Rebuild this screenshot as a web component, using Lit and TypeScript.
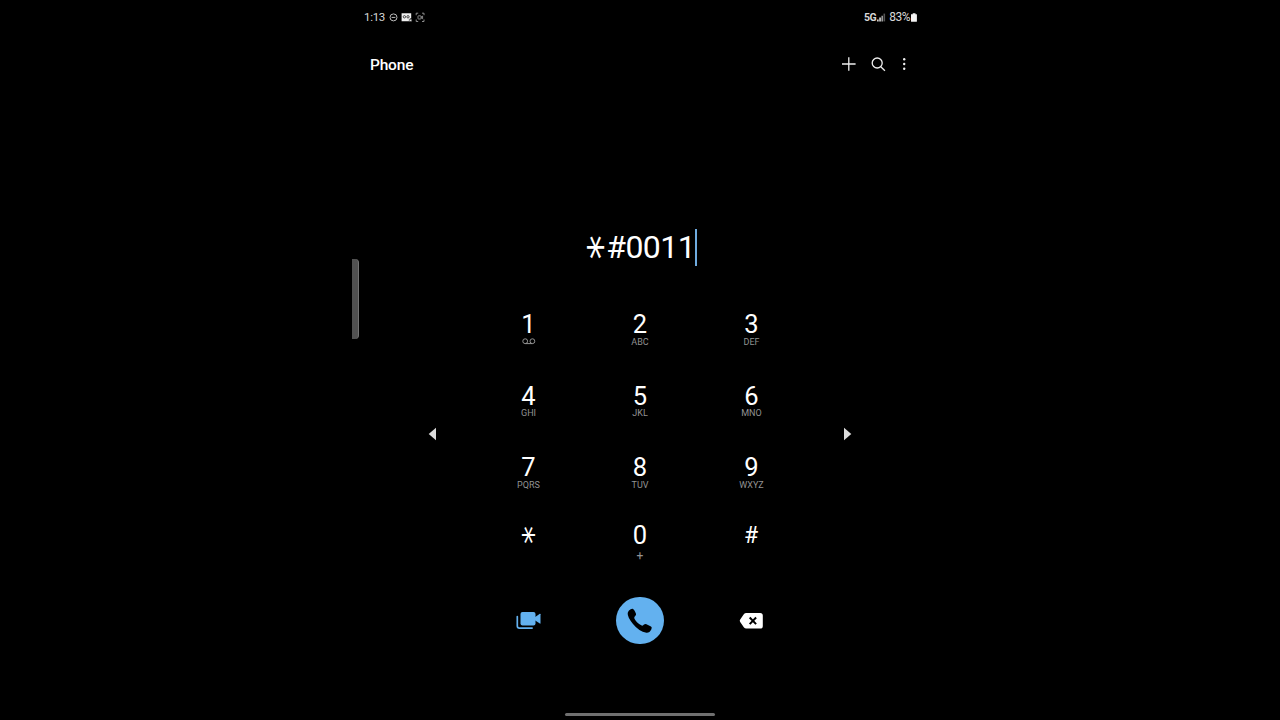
import { LitElement, html, css, svg, nothing } from "lit";
import { customElement, property } from "lit/decorators.js";

interface Key {
  digit: string;
  letters?: string;
}

const KEYS: Key[] = [
  { digit: "1", letters: "voicemail" },
  { digit: "2", letters: "ABC" },
  { digit: "3", letters: "DEF" },
  { digit: "4", letters: "GHI" },
  { digit: "5", letters: "JKL" },
  { digit: "6", letters: "MNO" },
  { digit: "7", letters: "PQRS" },
  { digit: "8", letters: "TUV" },
  { digit: "9", letters: "WXYZ" },
  { digit: "*" },
  { digit: "0", letters: "+" },
  { digit: "#" },
];

@customElement("status-bar")
export class StatusBar extends LitElement {
  static styles = css`
    :host {
      display: flex;
      justify-content: space-between;
      height: 34px;
      padding: 0 10px 0 12px;
      font-size: 12px;
      color: #d8d8d8;
    }

    .group {
      display: flex;
      align-items: center;
    }

    .time {
      width: 25px;
      font-size: 11.5px;
      letter-spacing: -0.3px;
    }

    .network {
      font-size: 10.5px;
      font-weight: 700;
      letter-spacing: -0.5px;
    }

    .battery {
      letter-spacing: -0.5px;
    }

    svg {
      display: block;
    }
  `;

  render() {
    return html`
      <div class="group">
        <span class="time">1:13</span>
        <svg width="38" height="12" viewBox="0 0 38 12" fill="none" stroke="#bbb">
          <circle cx="4.5" cy="6.4" r="3.5" stroke-width="1" />
          <path d="M2.6 6.4h3.8" />
          <path d="M12.600 2.200h9.600v5.400h-1.200v2.600h-8.400z" fill="#f0f0f0" stroke="none" />
          <circle cx="15.4" cy="5.8" r="1.2" stroke="#222" stroke-width="0.8" />
          <circle cx="19" cy="5.8" r="1.2" stroke="#222" stroke-width="0.8" />
          <path d="M20.3 8.2h2.5v2.3h-2.5z" fill="#ddd" stroke="#111" stroke-width="0.5" />
          <g stroke="#999" stroke-width="0.9">
            <path d="M27.2 4.2v-2h2M33 2.2h2v2M35 8.5v2h-2M29.2 10.5h-2v-2" />
            <rect x="29" y="4.8" width="3" height="3.2" rx="0.5" />
            <path d="M32 6.2l1.6-1.1v2.6L32 6.6" />
          </g>
        </svg>
      </div>
      <div class="group">
        <span class="network">5G</span>
        <svg width="13" height="12" viewBox="0 0 13 12">
          <path d="M1 10.400V8.500h1.700v1.900zM3.200 10.400V6.600h1.700v3.800z" fill="#ccc" />
          <path d="M5.400 10.400V4.700h1.600v5.700z" fill="#999" />
          <path d="M7.500 10.400V2.600h1.600v7.800z" fill="#555" />
        </svg>
        <span class="battery">83%</span>
        <svg width="8" height="12" viewBox="0 0 8 12">
          <path d="M2.700 2.200h2.800v1.100h1.400v6.900q0 .6-.6.6H1.600q-.6 0-.6-.6V3.300h1.700z" fill="#f4f4f4" />
        </svg>
      </div>
    `;
  }
}

@customElement("app-header")
export class AppHeader extends LitElement {
  static styles = css`
    :host {
      display: flex;
      align-items: center;
      justify-content: space-between;
      height: 60px;
      padding: 0 18px;
    }

    .title {
      padding-top: 1px;
      font-size: 15.5px;
      font-weight: 500;
      letter-spacing: -0.2px;
    }

    .actions {
      display: flex;
      align-items: center;
    }

    svg {
      display: block;
    }
  `;

  render() {
    return html`
      <div class="title">Phone</div>
      <div class="actions">
        <svg width="72" height="20" viewBox="0 0 72 20" fill="none" stroke="#eee" stroke-width="1.3">
          <path d="M4 10h13.6M10.8 3.2v13.6" />
          <circle cx="39.2" cy="9" r="5" />
          <path d="M42.8 12.7l4.1 4" />
          <g fill="#eee" stroke="none">
            <circle cx="66.2" cy="5.2" r="1.2" />
            <circle cx="66.2" cy="10" r="1.2" />
            <circle cx="66.2" cy="14.8" r="1.2" />
          </g>
        </svg>
      </div>
    `;
  }
}

@customElement("number-display")
export class NumberDisplay extends LitElement {
  @property() value = "";

  static styles = css`
    :host {
      display: flex;
      align-items: center;
      justify-content: center;
      height: 38px;
      padding-left: 3px;
      font-size: 32px;
      line-height: 38px;
      letter-spacing: -0.5px;
    }

    .star {
      width: 20px;
      text-align: center;
      font-family: "DejaVu Sans", sans-serif;
      font-size: 38px;
      transform: translateX(-7px) rotate(90deg) scaleX(1.3);
    }

    .caret {
      width: 1.5px;
      height: 37px;
      background: #6fabdf;
    }
  `;

  render() {
    return html`
      ${[...this.value].map((c) =>
        c === "*" ? html`<span class="star">*</span>` : html`<span>${c}</span>`
      )}
      <span class="caret"></span>
    `;
  }
}

@customElement("dial-key")
export class DialKey extends LitElement {
  @property() digit = "";
  @property() letters = "";

  static styles = css`
    :host {
      display: flex;
      flex-direction: column;
      align-items: center;
    }

    .digit {
      height: 26px;
      font-size: 25.5px;
      line-height: 26px;
    }

    .hash {
      padding-right: 1px;
      font-size: 23px;
      line-height: 27px;
    }

    .star {
      font-family: "DejaVu Sans", sans-serif;
      font-size: 29px;
      transform: translate(-4.5px, 0) rotate(90deg) scaleX(1.25);
    }

    .letters {
      padding-top: 0.8px;
      font-size: 9px;
      line-height: 8px;
      color: #929292;
    }

    .plus {
      font-size: 12px;
      padding-top: 4px;
    }

    svg {
      display: block;
      margin-top: 0.5px;
    }
  `;

  private _renderLetters() {
    if (!this.letters) return nothing;
    if (this.letters === "voicemail") {
      return html`
        <svg width="14" height="8" viewBox="0 0 14 8" fill="none" stroke="#929292">
          <circle cx="3.2" cy="3.2" r="2.4" />
          <circle cx="10.4" cy="3.2" r="2.4" />
          <path d="M3.2 5.6h7.2" />
        </svg>
      `;
    }
    return html`<div class="letters ${this.letters === "+" ? "plus" : ""}">${this.letters}</div>`;
  }

  render() {
    const kind = this.digit === "*" ? "star" : this.digit === "#" ? "hash" : "";
    return html`
      <div class="digit ${kind}">${this.digit}</div>
      ${this._renderLetters()}
    `;
  }
}

@customElement("app-root")
export class AppRoot extends LitElement {
  static styles = css`
    :host {
      display: flex;
      justify-content: center;
      height: 720px;
      background: #000;
      color: #fff;
      font-family: Roboto, sans-serif;
      overflow: hidden;
    }

    .screen {
      position: relative;
      display: flex;
      flex-direction: column;
      width: 576px;
    }

    .edge-handle {
      position: absolute;
      left: 0;
      top: 259px;
      width: 7px;
      height: 80px;
      box-sizing: border-box;
      border-right: 1px solid #747474;
      border-radius: 0 4px 4px 0;
      background: #515151;
    }

    number-display {
      margin-top: 134px;
    }

    .pad {
      display: flex;
      align-items: center;
      justify-content: space-between;
      margin-top: 45.4px;
      padding: 0 76px;
    }

    .keys {
      display: grid;
      grid-template-columns: repeat(3, 111.5px);
      grid-template-rows: 71.3px 71.3px 68.5px 34px;
    }

    svg {
      display: block;
    }

    .actions {
      display: grid;
      grid-template-columns: repeat(3, 111.5px);
      justify-content: center;
      align-items: center;
      justify-items: center;
      margin-top: 40.3px;
    }

    .call {
      display: flex;
      align-items: center;
      justify-content: center;
      width: 47.5px;
      height: 47.5px;
      border-radius: 50%;
      background: #63b1ef;
    }

    .home {
      width: 150px;
      height: 3px;
      margin: auto auto 4px;
      border-radius: 2px;
      background: #707070;
    }
  `;

  private _arrow(points: string) {
    return html`
      <svg width="9" height="14" viewBox="0 0 9 14">
        ${svg`<polygon points=${points} fill="#dcdcdc" />`}
      </svg>
    `;
  }

  render() {
    return html`
      <div class="screen">
        <status-bar></status-bar>
        <app-header></app-header>
        <number-display value="*#0011"></number-display>
        <div class="pad">
          ${this._arrow("0.7,7 8,0.8 8,13.2")}
          <div class="keys">
            ${KEYS.map(
              (k) => html`<dial-key .digit=${k.digit} .letters=${k.letters ?? ""}></dial-key>`
            )}
          </div>
          ${this._arrow("8.3,7 1,0.8 1,13.2")}
        </div>
        <div class="actions">
          <svg width="26" height="20" viewBox="0 0 26 20" fill="#63b1ef">
            <rect x="4.5" y="1" width="15" height="13.6" rx="2" />
            <path d="M18.5 6.6l5.3-3.8q.7-.3.7.4v9q0 .7-.7.4L18.5 9z" />
            <path
              d="M1.3 5.6v9.3q0 2.2 2.2 2.2h12.6"
              fill="none"
              stroke="#63b1ef"
              stroke-width="1.7"
              stroke-linecap="round"
            />
          </svg>
          <div class="call">
            <svg width="26" height="26" viewBox="0 0 26 26">
              <path
                d="M2 2.6Q4 .4 5.6.7 7 1 8.9 5.5 9.4 6.8 8.4 7.8 6.9 9 7.3 10.2 9 14.7 14.7 17.5 15.9 18 17 16.6 18.2 15.4 19.5 16.2L24 18.6Q25.3 19.5 24.4 21.2 22.6 25 19.4 24.7 12 23.5 6 16 .2 8.8.7 5 1 3.7 2 2.6z"
              />
            </svg>
          </div>
          <svg width="26" height="18" viewBox="0 0 26 18">
            <path
              d="M7.2 1h14q2.6 0 2.6 2.6v10.3q0 2.6-2.6 2.6h-14q-1.3 0-2.2-1L1.2 10q-1-1.2 0-2.4L5 2q.9-1 2.2-1z"
              fill="#fff"
            />
            <path d="M10.7 5.5l6.4 6.6M17.1 5.5l-6.4 6.6" stroke="#000" stroke-width="2" />
          </svg>
        </div>
        <div class="home"></div>
        <div class="edge-handle"></div>
      </div>
    `;
  }
}
